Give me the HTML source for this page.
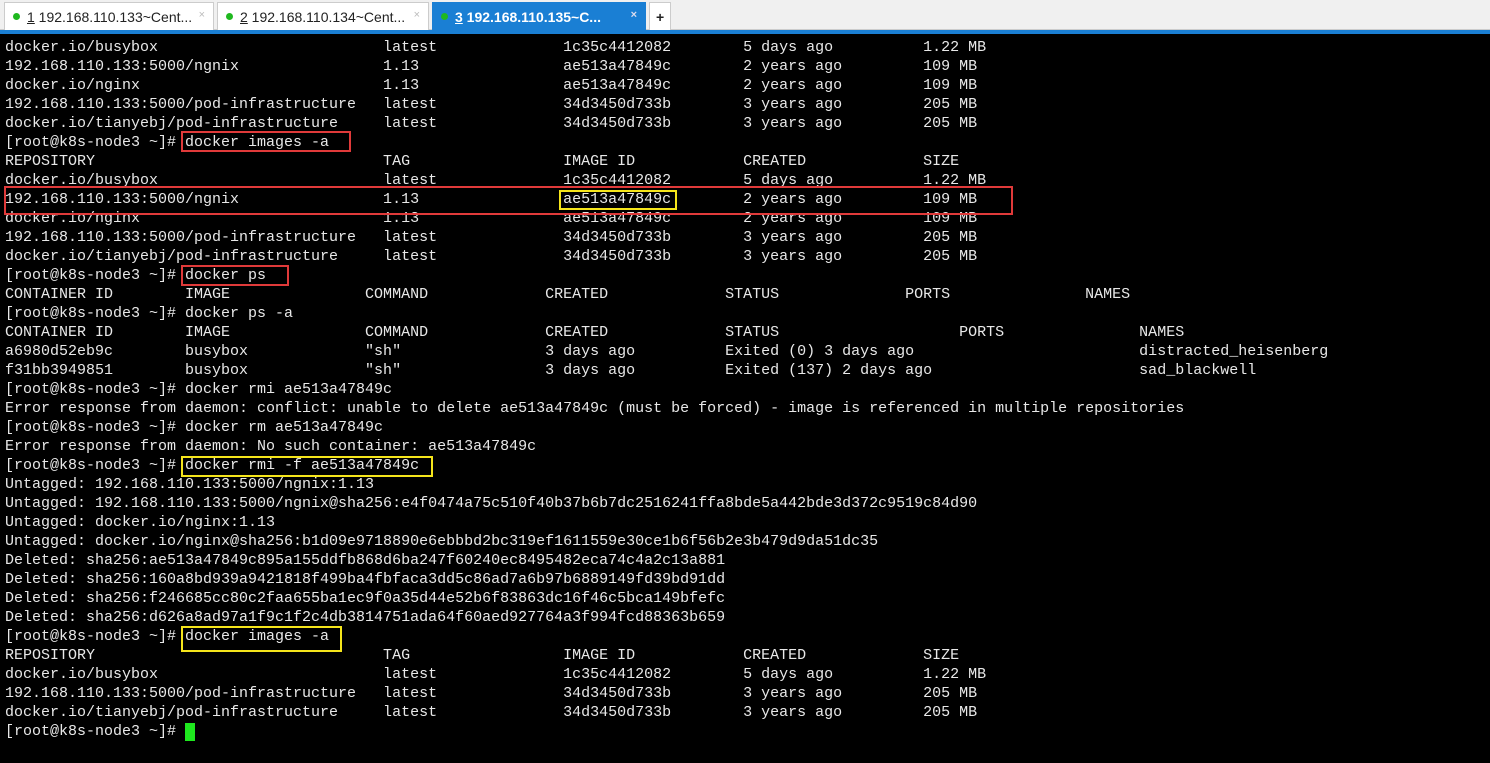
<!DOCTYPE html>
<html><head><meta charset="utf-8"><style>
*{margin:0;padding:0;box-sizing:border-box}
body{width:1490px;height:763px;background:#000;overflow:hidden;position:relative;font-family:"Liberation Sans",sans-serif}
#tabs{position:absolute;left:0;top:0;width:1490px;height:30px;background:#f0f0f0;border-bottom:1px solid #ccc}
#bar{position:absolute;left:0;top:30px;width:1490px;height:4px;background:#1a7fd4}
.tab{position:absolute;top:2px;height:28px;background:#fff;border:1px solid #ccc;border-bottom:none;font-size:14px;color:#222;line-height:28px;padding-left:22px;white-space:nowrap}
.tab .dot{position:absolute;left:8px;top:10px;width:7px;height:7px;border-radius:50%;background:#1fb81f}
.tab .x{position:absolute;right:8px;top:-2px;color:#bbb;font-size:11px}
.tab.act{background:#1a7fd4;color:#fff;font-weight:bold;border-color:#1a7fd4}
.tab.act .x{color:#dde}
#term{position:absolute;left:5px;top:38px;font-family:"Liberation Mono",monospace;font-size:15px;line-height:19px;color:#e8e8e8;white-space:pre}
.box{position:absolute;border:2px solid}
.r{border-color:#e03a3a}.y{border-color:#f5e51b}
</style></head><body>
<div id="tabs">
<div class="tab" style="left:4px;width:210px"><span class="dot"></span><u>1</u> 192.168.110.133~Cent...<span class="x">×</span></div>
<div class="tab" style="left:217px;width:212px"><span class="dot"></span><u>2</u> 192.168.110.134~Cent...<span class="x">×</span></div>
<div class="tab act" style="left:432px;width:214px"><span class="dot"></span><u>3</u> 192.168.110.135~C...<span class="x">×</span></div>
<div class="tab" style="left:649px;width:22px;padding-left:6px;font-weight:bold">+</div>
</div>
<div id="bar"></div>
<div id="term">docker.io/busybox                         latest              1c35c4412082        5 days ago          1.22 MB
192.168.110.133:5000/ngnix                1.13                ae513a47849c        2 years ago         109 MB
docker.io/nginx                           1.13                ae513a47849c        2 years ago         109 MB
192.168.110.133:5000/pod-infrastructure   latest              34d3450d733b        3 years ago         205 MB
docker.io/tianyebj/pod-infrastructure     latest              34d3450d733b        3 years ago         205 MB
[root@k8s-node3 ~]# docker images -a
REPOSITORY                                TAG                 IMAGE ID            CREATED             SIZE
docker.io/busybox                         latest              1c35c4412082        5 days ago          1.22 MB
192.168.110.133:5000/ngnix                1.13                ae513a47849c        2 years ago         109 MB
docker.io/nginx                           1.13                ae513a47849c        2 years ago         109 MB
192.168.110.133:5000/pod-infrastructure   latest              34d3450d733b        3 years ago         205 MB
docker.io/tianyebj/pod-infrastructure     latest              34d3450d733b        3 years ago         205 MB
[root@k8s-node3 ~]# docker ps
CONTAINER ID        IMAGE               COMMAND             CREATED             STATUS              PORTS               NAMES
[root@k8s-node3 ~]# docker ps -a
CONTAINER ID        IMAGE               COMMAND             CREATED             STATUS                    PORTS               NAMES
a6980d52eb9c        busybox             "sh"                3 days ago          Exited (0) 3 days ago                         distracted_heisenberg
f31bb3949851        busybox             "sh"                3 days ago          Exited (137) 2 days ago                       sad_blackwell
[root@k8s-node3 ~]# docker rmi ae513a47849c
Error response from daemon: conflict: unable to delete ae513a47849c (must be forced) - image is referenced in multiple repositories
[root@k8s-node3 ~]# docker rm ae513a47849c
Error response from daemon: No such container: ae513a47849c
[root@k8s-node3 ~]# docker rmi -f ae513a47849c
Untagged: 192.168.110.133:5000/ngnix:1.13
Untagged: 192.168.110.133:5000/ngnix@sha256:e4f0474a75c510f40b37b6b7dc2516241ffa8bde5a442bde3d372c9519c84d90
Untagged: docker.io/nginx:1.13
Untagged: docker.io/nginx@sha256:b1d09e9718890e6ebbbd2bc319ef1611559e30ce1b6f56b2e3b479d9da51dc35
Deleted: sha256:ae513a47849c895a155ddfb868d6ba247f60240ec8495482eca74c4a2c13a881
Deleted: sha256:160a8bd939a9421818f499ba4fbfaca3dd5c86ad7a6b97b6889149fd39bd91dd
Deleted: sha256:f246685cc80c2faa655ba1ec9f0a35d44e52b6f83863dc16f46c5bca149bfefc
Deleted: sha256:d626a8ad97a1f9c1f2c4db3814751ada64f60aed927764a3f994fcd88363b659
[root@k8s-node3 ~]# docker images -a
REPOSITORY                                TAG                 IMAGE ID            CREATED             SIZE
docker.io/busybox                         latest              1c35c4412082        5 days ago          1.22 MB
192.168.110.133:5000/pod-infrastructure   latest              34d3450d733b        3 years ago         205 MB
docker.io/tianyebj/pod-infrastructure     latest              34d3450d733b        3 years ago         205 MB
[root@k8s-node3 ~]# </div>
<script>
(function(){
var t=document.getElementById('term');
var L=t.textContent.split('\n');
function fix(s){
 var m;
 if(/^(docker\.io|192\.168|REPOSITORY)/.test(s)){
  var p=s.split(/\s{2,}/);
  if(p.length>=5){return p[0].padEnd(42)+p[1].padEnd(20)+p[2].padEnd(20)+p[3].padEnd(20)+p[4];}
 }
 if(/^(CONTAINER ID|a6980|f31bb)/.test(s)){
  var q=s.split(/\s{2,}/);
  if(q.length===7){return q[0].padEnd(20)+q[1].padEnd(20)+q[2].padEnd(20)+q[3].padEnd(20)+q[4].padEnd(20)+q[5].padEnd(20)+q[6];}
  if(q.length===6&&/^CONTAINER/.test(s)){return q[0].padEnd(20)+q[1].padEnd(20)+q[2].padEnd(20)+q[3].padEnd(20)+q[4].padEnd(26)+q[5].padEnd(20)+'NAMES';}
  if(q.length===6){return q[0].padEnd(20)+q[1].padEnd(20)+q[2].padEnd(20)+q[3].padEnd(20)+q[4].padEnd(26)+''.padEnd(20)+q[5];}
 }
 return s;
}
for(var i=0;i<L.length;i++){
 if(i===13||i===15){var q=L[i].split(/\s{2,}/);
  if(i===13){L[i]=q[0].padEnd(20)+q[1].padEnd(20)+q[2].padEnd(20)+q[3].padEnd(20)+q[4].padEnd(20)+q[5].padEnd(20)+q[6];}
  else{L[i]=q[0].padEnd(20)+q[1].padEnd(20)+q[2].padEnd(20)+q[3].padEnd(20)+q[4].padEnd(26)+q[5].padEnd(20)+q[6];}
 } else L[i]=fix(L[i]);
}
t.textContent=L.join('\n');
})();
</script>
<div style="position:absolute;left:185px;top:723px;width:10px;height:18px;background:#1ee81e"></div>
<div class="box r" style="left:181px;top:131px;width:170px;height:21px"></div>
<div class="box r" style="left:4px;top:186px;width:1009px;height:29px"></div>
<div class="box y" style="left:559px;top:190px;width:118px;height:20px"></div>
<div class="box r" style="left:181px;top:265px;width:108px;height:21px"></div>
<div class="box y" style="left:181px;top:456px;width:252px;height:21px"></div>
<div class="box y" style="left:181px;top:626px;width:161px;height:26px"></div>
</body></html>
